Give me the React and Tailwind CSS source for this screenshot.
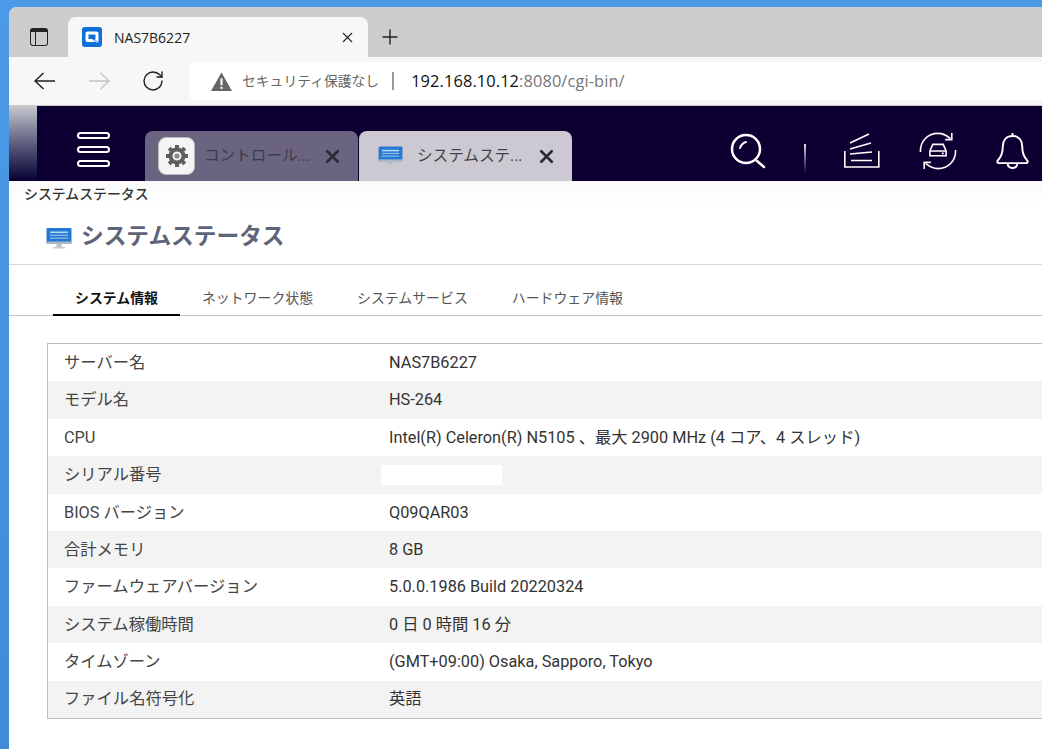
import React from 'react';
import { RotateCw, X, Plus } from 'lucide-react';

const FONT = { fontFamily: 'Roboto, "Noto Sans CJK JP", sans-serif' };

const ROWS = [
  ['サーバー名', 'NAS7B6227'],
  ['モデル名', 'HS-264'],
  ['CPU', 'Intel(R) Celeron(R) N5105 、最大 2900 MHz (4 コア、4 スレッド)'],
  ['シリアル番号', ''],
  ['BIOS バージョン', 'Q09QAR03'],
  ['合計メモリ', '8 GB'],
  ['ファームウェアバージョン', '5.0.0.1986 Build 20220324'],
  ['システム稼働時間', '0 日 0 時間 16 分'],
  ['タイムゾーン', '(GMT+09:00) Osaka, Sapporo, Tokyo'],
  ['ファイル名符号化', '英語'],
];

const TABS = ['システム情報', 'ネットワーク状態', 'システムサービス', 'ハードウェア情報'];

const MonitorIcon = ({ className }) => (
  <svg viewBox="0 0 26 22" className={className}>
    <rect x="0.5" y="0.5" width="25" height="15.5" rx="1" fill="#2679d0" />
    <rect x="0.5" y="14" width="25" height="2.5" fill="#a9b8c6" />
    <rect x="4" y="4" width="18" height="1.6" fill="#b5d6f5" />
    <rect x="4" y="7.2" width="18" height="1.2" fill="#8fc0ee" />
    <rect x="4" y="10" width="18" height="1.2" fill="#8fc0ee" />
    <rect x="10.5" y="16.5" width="5" height="3" fill="#b4bec6" />
    <rect x="7" y="19.5" width="12" height="1.5" fill="#c3ccd3" />
  </svg>
);

const GearIcon = () => (
  <svg viewBox="0 0 24 24" className="w-[24px] h-[24px]">
    <circle cx="12" cy="12" r="6.5" fill="none" stroke="#5f5f63" strokeWidth="4" />
    <circle cx="12" cy="12" r="2.6" fill="#8a8a8e" />
    <g stroke="#5f5f63" strokeWidth="4">
      <path d="M12 1v4M12 19v4M1 12h4M19 12h4" />
      <path d="M4.200 4.200l2.800 2.800M17 17l2.800 2.800M4.200 19.800L7 17M17 7l2.800-2.800" />
    </g>
  </svg>
);

const QnapFavicon = () => (
  <svg viewBox="0 0 20 20" className="w-5 h-5 shrink-0">
    <rect width="20" height="20" rx="3" fill="#0f6fd8" />
    <path d="M5.500 4.500h9a2 2 0 0 1 2 2V15h-11a2 2 0 0 1-2-2V6.500a2 2 0 0 1 2-2z" fill="#fff" />
    <rect x="6.500" y="7.500" width="7" height="4.500" fill="#0f6fd8" />
    <path d="M11 12l5 3.800" stroke="#0f6fd8" strokeWidth="1.600" />
    <path d="M12.500 13l3 2.500" stroke="#bfe0ff" strokeWidth="1.200" />
  </svg>
);

const BackIcon = ({ flip, color }) => (
  <svg viewBox="0 0 21 18" className={`w-[21px] h-[18px] ${flip ? 'scale-x-[-1]' : ''}`} fill="none" stroke={color} strokeWidth="1.500">
    <path d="M1 9h20M9.500 1L1 9l8.500 8" />
  </svg>
);

const SearchIcon = () => (
  <svg viewBox="0 0 36 36" className="w-9 h-9" fill="none" stroke="#fff">
    <circle cx="16" cy="16" r="14" strokeWidth="2.500" />
    <path d="M27 28l7 6" strokeWidth="2.500" strokeLinecap="round" />
    <path d="M10 15c1-3 3-5 6-6" strokeWidth="2" strokeLinecap="round" />
  </svg>
);

const StackIcon = () => (
  <svg viewBox="0 0 36 36" className="w-9 h-9" fill="none" stroke="#fff" strokeWidth="1.600">
    <path d="M0.800 18v16h34V18" />
    <path d="M7 27.500h21M6 21l22-2M6 16l21-6M6 10l19-9" />
  </svg>
);

const SyncIcon = () => (
  <svg viewBox="0 0 40 40" className="w-[38px] h-[38px]" fill="none" stroke="#fff" strokeWidth="1.700">
    <path d="M1.500 21C1 10 9 1.500 20 1.500c5 0 9 2 13 5.500" />
    <path d="M38.500 19C39 30 31 38.500 20 38.500c-5 0-9-2-13-5.500" />
    <path d="M34.500 1v7h-7M5.500 39v-7h7" />
    <path d="M11.500 25v-5l3-7h11l3 7v5zM11.500 20h17" />
    <path d="M24 22.500h2" />
  </svg>
);

const BellIcon = () => (
  <svg viewBox="0 0 34 38" className="w-[33px] h-[37px]" fill="none" stroke="#fff" strokeWidth="2">
    <path d="M17 4c-7 0-10 5-10 11 0 7-2 11-5 14-1 1-1 3 1 3h28c2 0 2-2 1-3-3-3-5-7-5-14 0-6-3-11-10-11z" />
    <path d="M17 1v3M12 32c0 3 2 5 5 5s5-2 5-5" />
  </svg>
);

const App = () => {
  return (
    <div className="w-[1042px] h-[749px] overflow-hidden bg-gradient-to-b from-[#4b9ae8] to-[#3f8bd8] pl-[9px] pt-[7px]" style={FONT}>
      <div className="h-[742px] bg-white rounded-tl-[8px] overflow-hidden flex flex-col">
        {/* tab strip */}
        <div className="h-[50px] bg-[#cdcdcd] flex items-end shrink-0">
          <div className="w-[59px] h-[40px] flex items-center justify-center">
            <div className="w-[18px] h-[18px] rounded-[3px] border-[1.5px] border-[#222] border-t-[4px] relative">
              <div className="absolute left-[4px] top-0 bottom-0 w-[1.5px] bg-[#222]" />
            </div>
          </div>
          <div className="w-[300px] h-[40px] bg-[#f7f7f7] rounded-t-[8px] flex items-center pl-[14px] pr-[12px]">
            <QnapFavicon />
            <span className="ml-[12px] text-[14px] text-[#222] flex-1" style={{ fontFamily: '"Open Sans", sans-serif' }}>NAS7B6227</span>
            <X size={17} strokeWidth={1.5} className="text-[#222]" />
          </div>
          <div className="w-[44px] h-[40px] flex items-center justify-center">
            <Plus size={24} strokeWidth={1.4} className="text-[#222]" />
          </div>
        </div>

        {/* toolbar */}
        <div className="h-[49px] bg-[#f7f7f7] border-b border-[#c8c8c8] flex items-center shrink-0">
          <div className="w-[180px] flex items-center">
            <div className="ml-[25px]"><BackIcon color="#222" /></div>
            <div className="ml-[34px]"><BackIcon flip color="#c4c4c4" /></div>
            <RotateCw size={24} strokeWidth={1.4} className="ml-[31px] text-[#222]" />
          </div>
          <div className="flex-1 h-[38px] bg-white rounded-l-[6px] flex items-center pl-[22px]">
            <svg viewBox="0 0 20 18" className="w-[21px] h-[19px]">
              <path d="M10 0.500L20 18H0z" fill="#666" />
              <rect x="9" y="6" width="2" height="6.500" fill="#fff" />
              <rect x="9" y="14" width="2" height="2" fill="#fff" />
            </svg>
            <span className="ml-[10px] text-[13.800px] text-[#666]">セキュリティ保護なし</span>
            <span className="ml-[13px] w-[2px] h-[18px] bg-[#999]" />
            <span className="ml-[17px] text-[16.400px] tracking-[0.1px]" style={{ fontFamily: '"Open Sans", sans-serif' }}>
              <span className="text-[#111]">192.168.10.12</span>
              <span className="text-[#777]">:8080/cgi-bin/</span>
            </span>
          </div>
        </div>

        {/* NAS top bar */}
        <div className="h-[75px] bg-[#0c0033] flex items-end shrink-0">
          <div className="w-[28px] h-full bg-gradient-to-b from-[#c8c8cc] to-[#0c0033]" />
          <div className="w-[108px] h-full flex flex-col items-center justify-center gap-[7px] pt-[12px] pl-[4px]">
            <span className="w-[33px] h-[7px] rounded-full border-2 border-white" />
            <span className="w-[33px] h-[7px] rounded-full border-2 border-white" />
            <span className="w-[33px] h-[7px] rounded-full border-2 border-white" />
          </div>
          <div className="w-[213px] h-[50px] bg-[#6b6480] rounded-t-[8px] flex items-center pl-[13px] mr-[1px]">
            <div className="w-[37px] h-[38px] rounded-[8px] bg-[#f4f4f4] border border-[#bbb] flex items-center justify-center shrink-0">
              <GearIcon />
            </div>
            <span className="ml-[9px] pt-[2px] text-[15.600px] text-[#3d3a48] w-[110px] whitespace-nowrap">コントロール...</span>
            <X size={21} strokeWidth={3} className="ml-[8px] text-[#2b2b33]" />
          </div>
          <div className="w-[213px] h-[50px] bg-[#ccc9d3] rounded-t-[8px] flex items-center pl-[19px]">
            <MonitorIcon className="w-[25px] h-[21px] shrink-0" />
            <span className="ml-[14px] pt-[2px] text-[15.600px] text-[#444] w-[112px] whitespace-nowrap">システムステ...</span>
            <X size={21} strokeWidth={3} className="ml-[7px] text-[#2b2b33]" />
          </div>
          <div className="h-full flex-1 flex items-center pt-[14px]">
            <div className="ml-[158px]"><SearchIcon /></div>
            <div className="ml-[38px] w-[2px] h-[30px] mt-[16px] bg-gradient-to-b from-[#ddd] to-[#0c0033]" />
            <div className="ml-[38px]"><StackIcon /></div>
            <div className="ml-[39px]"><SyncIcon /></div>
            <div className="ml-[39px]"><BellIcon /></div>
          </div>
        </div>

        {/* content */}
        <div className="flex-1">
          <div className="h-[23px] pl-[15px] pt-[5px] text-[13.900px] leading-[16px] font-medium text-[#333] bg-gradient-to-b from-[#fafafa] to-white">
            システムステータス
          </div>
          <div className="h-[61px] border-b border-[#d8d8d8] pl-[37px] pt-[10px] pb-[4px] flex items-center bg-white">
            <MonitorIcon className="w-[26px] h-[23px] mt-[3px]" />
            <span className="ml-[9px] text-[22.700px] font-bold text-[#5f6579]">システムステータス</span>
          </div>
          <div className="h-[51px] mx-0 border-b border-[#c4c4c4] pl-[44px] flex items-end">
            {TABS.map((tab, i) => (
              <div
                key={tab}
                className={`h-[35px] px-[22px] text-[13.900px] leading-[34px] -mb-px ${i === 0 ? 'font-bold text-[#111] border-b-2 border-black' : 'text-[#555]'}`}
              >
                {tab}
              </div>
            ))}
          </div>
          <div className="pl-[38px] pt-[27px]">
            <div className="border border-[#bdbdbd] border-r-0">
              {ROWS.map(([label, value], i) => (
                <div key={label} className={`h-[37.400px] pt-[1px] flex items-center text-[16.300px] text-[#333] ${i % 2 === 1 ? 'bg-[#f3f3f3]' : 'bg-white'}`}>
                  <div className="w-[341px] pl-[16px] shrink-0 text-[#444]">{label}</div>
                  {label === 'シリアル番号' ? (
                    <div className="w-[121px] h-[20px] bg-white -ml-[8px]" />
                  ) : (
                    <div className="whitespace-nowrap">{value}</div>
                  )}
                </div>
              ))}
            </div>
          </div>
        </div>
      </div>
    </div>
  );
};

export default App;
